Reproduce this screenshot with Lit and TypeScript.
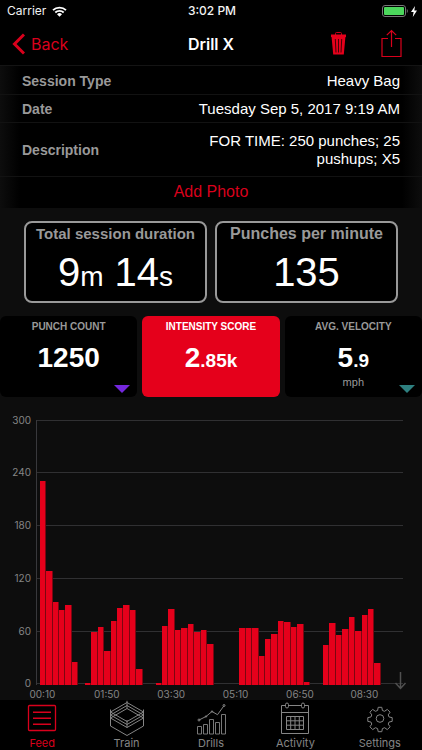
import { LitElement, html, svg, css } from "lit";
import { customElement, property } from "lit/decorators.js";
import { classMap } from "lit/directives/class-map.js";

@customElement("status-bar")
export class StatusBar extends LitElement {
  static styles = css`
    :host {
      display: grid;
      grid-template-columns: 1fr auto 1fr;
      align-items: center;
      height: 22px;
      padding: 0 5px 0 7px;
      color: #f2f2f2;
      font: 12px/22px Inter, "Liberation Sans", sans-serif;
    }
    .side {
      display: flex;
      align-items: center;
      gap: 6px;
    }
    .end {
      justify-content: flex-end;
      gap: 3px;
    }
    .time {
      font-weight: 500;
    }
    svg {
      display: block;
    }
  `;

  render() {
    return html`
      <div class="side">
        <span>Carrier</span>
        <svg width="15" height="11" viewBox="0 0 15 11" aria-label="Wi-Fi">
          <path d="M1 4.2a9.3 9.3 0 0 1 13 0M3.3 6.5a6 6 0 0 1 8.4 0" fill="none" stroke="#fff" stroke-width="1.8" />
          <path d="M5 8.2a3.6 3.6 0 0 1 5 0L7.500 10.800z" fill="#fff" />
        </svg>
      </div>
      <span class="time">3:02 PM</span>
      <div class="side end">
        <svg width="26" height="12" viewBox="0 0 26 12" aria-label="Battery">
          <rect x=".5" y=".5" width="23" height="11" rx="2.500" fill="none" stroke="#777" />
          <rect x="2" y="2" width="20" height="8" rx="1" fill="#4cd75c" />
          <path d="M24.800 4v4q1-.6 1-2t-1-2z" fill="#777" />
        </svg>
        <svg width="6" height="11" viewBox="0 0 6 11" aria-label="Charging">
          <path d="M4 0 0 6h2.600L1.800 11 6 4.600H3.300z" fill="#fff" />
        </svg>
      </div>
    `;
  }
}

@customElement("nav-header")
export class NavHeader extends LitElement {
  static styles = css`
    :host {
      display: grid;
      grid-template-columns: 1fr auto 1fr;
      align-items: center;
      height: 44px;
      padding: 0 12px;
      border-bottom: 1px solid #141414;
      box-sizing: border-box;
      font-family: Inter, "Liberation Sans", sans-serif;
    }
    button {
      border: 0;
      padding: 0;
      background: none;
      color: #d9001c;
      font: inherit;
      cursor: pointer;
    }
    svg {
      display: block;
    }
    .back {
      display: flex;
      align-items: center;
      gap: 6px;
      justify-self: start;
      font-size: 16px;
    }
    h1 {
      margin: 0;
      color: #fff;
      font-size: 16px;
      font-weight: 600;
    }
    .actions {
      display: flex;
      align-items: center;
      justify-content: flex-end;
      gap: 34px;
      padding-right: 8px;
    }
  `;

  render() {
    return html`
      <button class="back">
        <svg width="13" height="22" viewBox="0 0 13 22" aria-hidden="true">
          <path d="M12 1.500 2.500 11 12 20.500" fill="none" stroke="#d9001c" stroke-width="3" />
        </svg>
        <span>Back</span>
      </button>
      <h1>Drill X</h1>
      <div class="actions">
        <button aria-label="Delete">
          <svg width="17" height="24" viewBox="0 0 17 24">
            <path d="M5.500 3V1.500Q5.500.5 6.500.5h4q1 0 1 1V3" fill="none" stroke="#c80019" />
            <path d="M1 2.500h15v2.600H1z" fill="#e5001b" />
            <path d="M1.600 5h13.800L13.800 22.500H3.200z" fill="#e5001b" />
            <path d="M5.300 7 6 20.500M8.500 7v13.500M11.700 7 11 20.500" stroke="#400007" />
          </svg>
        </button>
        <button aria-label="Share">
          <svg width="21" height="29" viewBox="0 0 21 29">
            <path d="M7 9.500H1v18h19v-18h-6M10.500 18V1.500M5.800 6.200l4.700-4.700 4.700 4.700" fill="none" stroke="#d9001c" stroke-width="1.200" />
          </svg>
        </button>
      </div>
    `;
  }
}

@customElement("session-details")
export class SessionDetails extends LitElement {
  static styles = css`
    :host {
      display: block;
      background: linear-gradient(90deg, #0d0d0d, #000 20px, #000 calc(100% - 20px), #0d0d0d);
    }
    table {
      width: 100%;
      border-collapse: collapse;
    }
    tr {
      border-bottom: 1px solid #121212;
    }
    th,
    td {
      height: 28px;
      padding: 2px 22px 0;
      box-sizing: border-box;
    }
    .tall th,
    .tall td {
      height: 54px;
    }
    th {
      color: #999;
      font-size: 14px;
      text-align: left;
      white-space: nowrap;
    }
    td {
      padding-left: 0;
      color: #fff;
      font-size: 15px;
      line-height: 18px;
      text-align: right;
    }
    .text {
      display: inline-block;
      max-width: 200px;
    }
    button {
      display: block;
      width: 100%;
      height: 31px;
      padding: 0;
      border: 0;
      background: none;
      color: #d9001c;
      font: inherit;
      font-size: 16px;
      cursor: pointer;
    }
  `;

  render() {
    return html`
      <table>
        <tr>
          <th scope="row">Session Type</th>
          <td>Heavy Bag</td>
        </tr>
        <tr>
          <th scope="row">Date</th>
          <td>Tuesday Sep 5, 2017 9:19 AM</td>
        </tr>
        <tr class="tall">
          <th scope="row">Description</th>
          <td><span class="text">FOR TIME: 250 punches; 25 pushups; X5</span></td>
        </tr>
      </table>
      <button>Add Photo</button>
    `;
  }
}

@customElement("session-totals")
export class SessionTotals extends LitElement {
  static styles = css`
    :host {
      display: grid;
      grid-template-columns: 1fr 1fr;
      gap: 8px;
      padding: 13px 24px;
    }
    section {
      box-sizing: border-box;
      height: 82px;
      border: 2px solid #999;
      border-radius: 8px;
      background: #000;
      text-align: center;
      white-space: nowrap;
    }
    h2 {
      margin: 1px 0 0;
      color: #999;
      font-size: 15px;
      line-height: 20px;
    }
    .large {
      font-size: 16px;
    }
    p {
      margin: 4px 0 0;
      color: #fff;
      font-size: 40px;
      line-height: 48px;
    }
    small {
      font-size: 28px;
    }
  `;

  render() {
    return html`
      <section>
        <h2>Total session duration</h2>
        <p>9<small>m</small> 14<small>s</small></p>
      </section>
      <section>
        <h2 class="large">Punches per minute</h2>
        <p>135</p>
      </section>
    `;
  }
}

interface Metric {
  name: string;
  whole: string;
  part?: string;
  unit?: string;
  marker?: string;
  active?: boolean;
}

@customElement("metric-tabs")
export class MetricTabs extends LitElement {
  private metrics: Metric[] = [
    { name: "PUNCH COUNT", whole: "1250", marker: "#7427dd" },
    { name: "INTENSITY SCORE", whole: "2", part: ".85k", active: true },
    { name: "AVG. VELOCITY", whole: "5", part: ".9", unit: "mph", marker: "#2e8080" },
  ];

  static styles = css`
    :host {
      display: grid;
      grid-template-columns: repeat(3, 1fr);
      gap: 5px;
    }
    button {
      position: relative;
      display: flex;
      flex-direction: column;
      align-items: center;
      height: 81px;
      padding: 4px 0 0;
      border: 0;
      border-radius: 6px;
      background: #000;
      color: #999;
      font: inherit;
      cursor: pointer;
    }
    .active {
      background: #e5001b;
      color: #fff;
    }
    .name {
      font-size: 10px;
      font-weight: 700;
      line-height: 14px;
    }
    .value {
      margin-top: 8px;
      color: #fff;
      font-size: 28px;
      font-weight: 700;
      line-height: 32px;
    }
    .part {
      font-size: 19px;
      line-height: 19px;
    }
    .unit {
      font-size: 11px;
      line-height: 16px;
    }
    .marker {
      position: absolute;
      right: 7px;
      bottom: 4px;
    }
  `;

  render() {
    return this.metrics.map(
      (m) => html`
        <button class=${classMap({ active: !!m.active })} aria-pressed=${m.active ? "true" : "false"}>
          <span class="name">${m.name}</span>
          <span class="value">${m.whole}<span class="part">${m.part ?? ""}</span></span>
          ${m.unit ? html`<span class="unit">${m.unit}</span>` : ""}
          ${m.marker
            ? html`<svg class="marker" width="16" height="8" viewBox="0 0 16 8" aria-hidden="true">
                <path d="M0 0h16L8 8z" fill=${m.marker} />
              </svg>`
            : ""}
        </button>
      `
    );
  }
}

@customElement("intensity-chart")
export class IntensityChart extends LitElement {
  @property({ type: Number }) max = 300;

  private ticks = [300, 240, 180, 120, 60, 0];
  private times = ["00:10", "01:50", "03:30", "05:10", "06:50", "08:30"];
  private values = [
    230, 129, 93, 84, 90, 25, 0, 2, 60, 65, 38, 72, 87, 90, 84, 18, 0, 0, 2,
    66, 86, 62, 64, 68, 59, 62, 46, 0, 0, 0, 0, 64, 64, 64, 32, 52, 57, 72,
    71, 65, 69, 3, 0, 0, 45, 70, 56, 63, 76, 61, 79, 85, 24, 0, 0, 0,
  ];

  static styles = css`
    :host {
      display: grid;
      grid-template-columns: 31px 1fr;
      column-gap: 5px;
      position: relative;
      padding: 23px 19px 0 0;
      color: #858585;
      font: 10px/14px Inter, "Liberation Sans", sans-serif;
    }
    .ticks {
      display: flex;
      flex-direction: column;
      justify-content: space-between;
      height: 278px;
      margin: -7px 0;
      text-align: right;
    }
    .plot {
      display: grid;
      height: 265px;
      border-left: 1px solid #38383c;
    }
    .lines,
    .bars {
      grid-area: 1 / 1;
      display: flex;
    }
    .lines {
      flex-direction: column;
      justify-content: space-between;
    }
    .line {
      height: 1px;
      background: #303032;
    }
    .bars {
      align-items: flex-end;
    }
    .edge {
      flex: 1;
    }
    .bar {
      flex: 2;
      box-sizing: border-box;
      background: #e5001b;
      border-right: 1px solid #7c0611;
    }
    .times {
      grid-column: 2;
      display: flex;
      width: calc(100% * 60 / 57);
      margin-left: calc(-100% * 4 / 57);
      padding-top: 3px;
      line-height: 12px;
    }
    .time {
      flex: 1;
      text-align: center;
    }
    .more {
      position: absolute;
      right: 15px;
      bottom: 10px;
    }
  `;

  render() {
    return html`
      <div class="ticks">${this.ticks.map((t) => html`<span>${t}</span>`)}</div>
      <div class="plot">
        <div class="lines">${this.ticks.map(() => html`<div class="line"></div>`)}</div>
        <div class="bars">
          <span class="edge"></span>
          ${this.values.map(
            (v) => html`<div class="bar" style="height:${(v / this.max) * 100}%"></div>`
          )}
          <span class="edge"></span>
        </div>
      </div>
      <div class="times">${this.times.map((t) => html`<span class="time">${t}</span>`)}</div>
      <svg class="more" width="13" height="18" viewBox="0 0 13 18" aria-hidden="true">
        <path d="M6.500 0v16M1.500 11l5 5.500 5-5.500" fill="none" stroke="#505050" stroke-width="1.500" />
      </svg>
    `;
  }
}

const icons = {
  feed: svg`<rect x="4.500" y="5.500" width="27" height="25" rx="1" stroke-width="1.300"/>
    <path d="M9 12.200h18M9 18.200h18M9 24.200h18" stroke-width="1.500"/>`,
  train: svg`<path d="M18 2.500 1.500 12 18 21.500 34.500 12zM18 5.500 1.500 15 18 24.500 34.500 15zM18 8.500 1.500 18 18 27.500 34.500 18zM1.500 9.500V26L18 35.500 34.500 26V9.500M18 .8v7.700M18 20v7.500"/>`,
  drills: svg`<path d="M4.500 26.500h4V34h-4zM10.500 24.500h4V34h-4zM16.500 19.500h4V34h-4zM22.500 22.500h4V34h-4zM28.500 14.500h4V34h-4z" stroke-width=".9"/>
    <path d="M6 20l7-3.500 6-5 5.500 3.200 6.500-9"/>
    <circle cx="6" cy="20" r="1"/><circle cx="13" cy="16.500" r=".7"/><circle cx="19" cy="11.500" r=".7"/><circle cx="31" cy="5.500" r="1"/>`,
  activity: svg`<path d="M8.500 5.500h-4v28h27v-28h-4M11.500 5.500h13M4.500 12.500h27"/>
    <rect x="8.500" y="3" width="3" height="5" rx="1.500"/><rect x="24.500" y="3" width="3" height="5" rx="1.500"/>
    <path d="M9.500 16.500h17v13h-17zM13.700 16.500v13M18 16.500v13M22.300 16.500v13M9.500 20.800h17M9.500 25.200h17"/>`,
  settings: svg`<circle cx="18" cy="18.500" r="3.800"/>
    <path d="M16.200 7.300h3.600l.6 3.200 2.200.8 2.700-1.900 2.800 2.800-1.900 2.700.9 2.100 3.100.6v3.800l-3.100.6-.9 2.100 1.900 2.700-2.800 2.800-2.700-1.900-2.200.9-.6 3.100h-3.600l-.6-3.100-2.200-.9-2.700 1.900-2.800-2.800 1.900-2.700-.9-2.100-3.100-.6v-3.800l3.100-.6.9-2.100-1.900-2.700 2.800-2.800 2.700 1.900 2.200-.8z"/>`,
};

@customElement("tab-bar")
export class TabBar extends LitElement {
  private tabs = [
    { label: "Feed", icon: icons.feed, active: true },
    { label: "Train", icon: icons.train },
    { label: "Drills", icon: icons.drills },
    { label: "Activity", icon: icons.activity },
    { label: "Settings", icon: icons.settings },
  ];

  static styles = css`
    :host {
      display: grid;
      grid-template-columns: repeat(5, 1fr);
      height: 50px;
      background: #000;
    }
    a {
      display: flex;
      flex-direction: column;
      align-items: center;
      color: #858585;
      font: 11px/12px Inter, "Liberation Sans", sans-serif;
      text-decoration: none;
    }
    .active {
      color: #d9001c;
    }
    svg {
      display: block;
      flex: none;
      fill: none;
      stroke: currentColor;
    }
  `;

  render() {
    return this.tabs.map(
      (t) => html`
        <a href="#${t.label.toLowerCase()}" class=${classMap({ active: !!t.active })}>
          <svg width="36" height="37" viewBox="0 0 36 37" aria-hidden="true">${t.icon}</svg>
          <span>${t.label}</span>
        </a>
      `
    );
  }
}

@customElement("app-root")
export class AppRoot extends LitElement {
  static styles = css`
    :host {
      display: flex;
      flex-direction: column;
      min-height: 100vh;
      background: #000;
      font-family: "Liberation Sans", Arial, sans-serif;
    }
    main {
      flex: 1;
      background: #0d0d0d;
    }
  `;

  render() {
    return html`
      <status-bar></status-bar>
      <nav-header></nav-header>
      <main>
        <session-details></session-details>
        <session-totals></session-totals>
        <metric-tabs></metric-tabs>
        <intensity-chart></intensity-chart>
      </main>
      <tab-bar></tab-bar>
    `;
  }
}
